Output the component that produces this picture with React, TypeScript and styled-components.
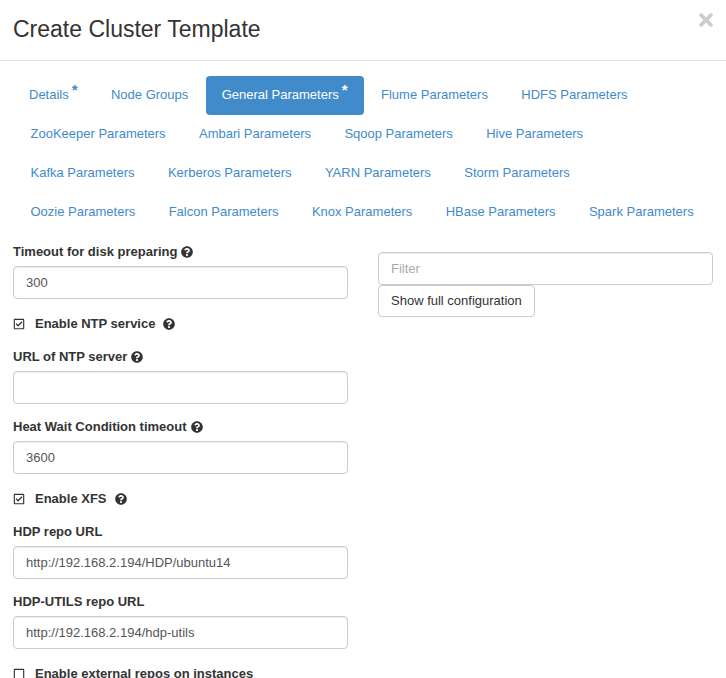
import styled, { createGlobalStyle } from "styled-components";
import { FaQuestionCircle, FaRegCheckSquare, FaRegSquare, FaTimes } from "react-icons/fa";

const GlobalStyle = createGlobalStyle`
  html, body {
    margin: 0;
    height: 678px;
    overflow: hidden;
    background: #fff;
    font-family: "Liberation Sans", Arial, sans-serif;
    font-size: 13px;
    color: #333;
  }
  * { box-sizing: border-box; }
`

const TABS = [
  { name: "Details", required: true },
  { name: "Node Groups" },
  { name: "General Parameters", required: true, active: true },
  { name: "Flume Parameters" },
  { name: "HDFS Parameters" },
  { name: "ZooKeeper Parameters" },
  { name: "Ambari Parameters" },
  { name: "Sqoop Parameters" },
  { name: "Hive Parameters" },
  { name: "Kafka Parameters" },
  { name: "Kerberos Parameters" },
  { name: "YARN Parameters" },
  { name: "Storm Parameters" },
  { name: "Oozie Parameters" },
  { name: "Falcon Parameters" },
  { name: "Knox Parameters" },
  { name: "HBase Parameters" },
  { name: "Spark Parameters" },
]

type Field =
  | { kind: "input"; label: string; value: string; help?: boolean }
  | { kind: "check"; label: string; checked: boolean; help?: boolean }

const FIELDS: Field[] = [
  { kind: "input", label: "Timeout for disk preparing", value: "300", help: true },
  { kind: "check", label: "Enable NTP service", checked: true, help: true },
  { kind: "input", label: "URL of NTP server", value: "", help: true },
  { kind: "input", label: "Heat Wait Condition timeout", value: "3600", help: true },
  { kind: "check", label: "Enable XFS", checked: true, help: true },
  { kind: "input", label: "HDP repo URL", value: "http://192.168.2.194/HDP/ubuntu14" },
  { kind: "input", label: "HDP-UTILS repo URL", value: "http://192.168.2.194/hdp-utils" },
  { kind: "check", label: "Enable external repos on instances", checked: false },
]

export default function App() {
  return (
    <>
      <GlobalStyle />
      <Modal>
        <Header>
          <Title>Create Cluster Template</Title>
          <Close aria-label="Close"><FaTimes /></Close>
        </Header>

        <Tabs>
          {TABS.map(tab => (
            <Tab key={tab.name} $active={tab.active}>
              {tab.name}
              {tab.required && <Star>*</Star>}
            </Tab>
          ))}
        </Tabs>

        <Columns>
          <div>
            {FIELDS.map(field => field.kind === "input" ? (
              <FormGroup key={field.label}>
                <Label>
                  {field.label}
                  {field.help && <HelpIcon />}
                </Label>
                <TextInput readOnly value={field.value} />
              </FormGroup>
            ) : (
              <CheckRow key={field.label}>
                <CheckBox>{field.checked ? <FaRegCheckSquare /> : <FaRegSquare />}</CheckBox>
                {field.label}
                {field.help && <CheckHelpIcon />}
              </CheckRow>
            ))}
          </div>
          <FilterColumn>
            <TextInput placeholder="Filter" />
            <ConfigButton type="button">Show full configuration</ConfigButton>
          </FilterColumn>
        </Columns>
      </Modal>
    </>
  )
}

const Modal = styled.div`
  width: 726px;
`

const Header = styled.header`
  height: 61px;
  padding: 13px 13px 0;
  border-bottom: 1px solid #e5e5e5;
  display: flex;
  justify-content: space-between;
`

const Title = styled.h1`
  margin: 0;
  font-size: 23px;
  font-weight: 400;
  line-height: 32px;
  color: #333;
`

const Close = styled.button`
  height: 20px;
  margin-top: -3px;
  padding: 0;
  border: 0;
  background: none;
  color: #cccccc;
  svg { display: block; width: 14px; height: 20px; }
`

const Tabs = styled.nav`
  padding: 15px 13px 0 14.5px;
  display: flex;
  flex-wrap: wrap;
  column-gap: 1.4px;
`

const Tab = styled.a<{ $active?: boolean }>`
  height: 39px;
  padding: 9px 16px;
  border-radius: 4px;
  line-height: 19px;
  white-space: nowrap;
  color: ${props => props.$active ? "#fff" : "#428bca"};
  background: ${props => props.$active ? "#428bca" : "transparent"};
  &:first-child { margin-left: -1.5px; }
`

const Star = styled.span`
  position: relative;
  top: -4px;
  margin-left: 3px;
  font-size: 15px;
  font-weight: 700;
  line-height: 0;
`

const Columns = styled.div`
  margin-top: 10px;
  padding: 0 13px;
  display: grid;
  grid-template-columns: 335px 335px;
  column-gap: 30px;
`

const FilterColumn = styled.div`
  padding-top: 10px;
`

const FormGroup = styled.div`
  margin-bottom: 13px;
`

const Label = styled.label`
  display: block;
  margin-bottom: 5px;
  font-weight: 700;
  line-height: 19px;
`

const HelpIcon = styled(FaQuestionCircle)`
  margin-left: 4px;
  width: 12px;
  height: 12px;
  vertical-align: -2px;
`

const CheckHelpIcon = styled(HelpIcon)`
  margin-left: 8px;
`

const TextInput = styled.input`
  display: block;
  width: 100%;
  height: 33px;
  padding: 6px 12px;
  border: 1px solid #ccc;
  border-radius: 4px;
  background: #fff;
  box-shadow: inset 0 1px 1px rgba(0, 0, 0, .075);
  font: inherit;
  color: #555;
  outline: none;
  &::placeholder { color: #aaa; opacity: 1; }
`

const CheckRow = styled.div`
  height: 19px;
  margin: 15px 0 14px;
  display: flex;
  align-items: center;
  font-weight: 700;
  line-height: 19px;
  white-space: pre;
`

const CheckBox = styled.span`
  width: 22px;
  display: flex;
  svg { width: 12px; height: 12px; }
`

const ConfigButton = styled.button`
  display: block;
  height: 32px;
  padding: 0 12px 2px;
  border: 1px solid #ccc;
  border-radius: 4px;
  background: #fff;
  font: inherit;
  color: #333;
`
